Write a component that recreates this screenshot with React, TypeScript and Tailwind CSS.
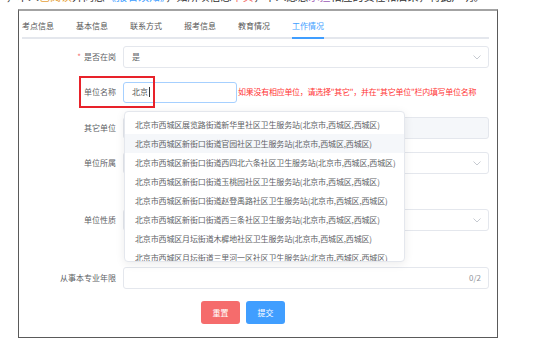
import type { ReactNode } from 'react';

const tabs = ['考点信息', '基本信息', '联系方式', '报考信息', '教育情况', '工作情况'];

const options = [
    '北京市西城区展览路街道新华里社区卫生服务站(北京市,西城区,西城区)',
    '北京市西城区新街口街道官园社区卫生服务站(北京市,西城区,西城区)',
    '北京市西城区新街口街道西四北六条社区卫生服务站(北京市,西城区,西城区)',
    '北京市西城区新街口街道玉桃园社区卫生服务站(北京市,西城区,西城区)',
    '北京市西城区新街口街道赵登禹路社区卫生服务站(北京市,西城区,西城区)',
    '北京市西城区新街口街道西三条社区卫生服务站(北京市,西城区,西城区)',
    '北京市西城区月坛街道木樨地社区卫生服务站(北京市,西城区,西城区)',
    '北京市西城区月坛街道三里河一区社区卫生服务站(北京市,西城区,西城区)',
];

function Chevron() {
    return (
        <svg className="h-[5px] w-[8px]" viewBox="0 0 8 5" fill="none">
            <polyline points="0.5,0.5 4,4 7.5,0.5" stroke="#c0c4cc" strokeWidth="0.9" />
        </svg>
    );
}

function FormRow({ label, required, className, children }: { label: string; required?: boolean; className?: string; children: ReactNode }) {
    return (
        <div className={`flex h-[22px] items-center ${className ?? ''}`}>
            <div className="w-[101px] shrink-0 pr-[7px] text-right text-[#606266]">
                {required ? <span className="mr-[3px] text-[#f56c6c]">*</span> : null}
                {label}
            </div>
            {children}
        </div>
    );
}

function SelectBox({ value }: { value?: string }) {
    return (
        <div className="flex h-[22px] flex-1 items-center justify-between rounded-[3px] border border-[#e4e7ed] bg-white pl-[8px] pr-[7px] text-[#606266]">
            <span>{value ?? ''}</span>
            <Chevron />
        </div>
    );
}

export default function App() {
    return (
        <div className="h-[341px] w-[533px] overflow-hidden bg-white font-['Noto_Sans_CJK_SC',sans-serif] text-[8px]">
            {/* tail of the line above the screenshot, mostly cut off */}
            <div className="h-[4px] overflow-hidden">
                <p className="-mt-[10px] whitespace-nowrap pl-[6px] text-[11px] leading-[12px] text-[#333]">
                    ，本人<span className="text-[#e6a23c]">已阅读</span>并同意<span className="text-[#409eff]">《报名须知》</span>，如所填信息<span className="text-[#f56c6c]">不实</span>，本人愿意<span className="text-[#9b59b6]">承担</span>相应的责任和后果，特此声明。
                </p>
            </div>

            <div className="relative ml-[18px] mt-[5px] h-[329px] w-[480px] border border-t-2 border-[#5a5a5a] border-t-[#a3a3a3] pl-[3px] pr-[8px]">
                <div className="flex gap-[22px] border-b-2 border-[#e4e7ed] pt-[4px]">
                    {tabs.map((tab, i) => (
                        <div
                            key={tab}
                            className={`-mb-[2px] h-[24px] border-b-2 leading-[22px] ${i === tabs.length - 1 ? 'border-[#409eff] text-[#409eff]' : 'border-transparent text-[#555]'}`}
                        >
                            {tab}
                        </div>
                    ))}
                </div>

                <div className="mt-[7px] flex flex-col">
                    <FormRow label="是否在岗" required>
                        <SelectBox value="是" />
                    </FormRow>

                    <FormRow label="单位名称" className="mt-[13px]">
                        <div className="flex h-[21px] w-[114px] items-center rounded-[3px] border border-[#a6d0ff] pl-[8px] text-[#555]">
                            北京<span className="ml-[1px] h-[10px] w-px bg-[#333]" />
                        </div>
                        <span className="ml-[1px] whitespace-nowrap tracking-[-0.27px] text-[#ff3333]">如果没有相应单位，请选择"其它"，并在"其它单位"栏内填写单位名称</span>
                    </FormRow>

                    <FormRow label="其它单位" className="mt-[14px]">
                        <div className="h-[22px] flex-1 rounded-[3px] border border-[#e4e7ed] bg-[#f5f7fa]" />
                    </FormRow>

                    <FormRow label="单位所属" className="mt-[13px]">
                        <SelectBox />
                    </FormRow>

                    <FormRow label="单位性质" className="mt-[35px]">
                        <SelectBox />
                    </FormRow>

                    <FormRow label="从事本专业年限" className="mt-[36px]">
                        <div className="flex h-[22px] flex-1 items-center justify-end rounded-[3px] border border-[#e4e7ed] pr-[7px] text-[#909399]">0/2</div>
                    </FormRow>

                    <div className="mt-[12px] flex gap-[6px] pl-[179px]">
                        <button className="h-[23px] w-[39px] rounded-[3px] bg-[#f56c6c] text-white">重置</button>
                        <button className="h-[23px] w-[39px] rounded-[3px] bg-[#409eff] text-white">提交</button>
                    </div>
                </div>

                {/* annotation box */}
                <div className="absolute left-[60px] top-[65px] h-[32px] w-[76px] border-2 border-[#e8222a]" />

                {/* autocomplete dropdown */}
                <div className="absolute left-[105px] top-[100px] h-[151px] w-[281px] overflow-hidden rounded-[4px] border border-[#e4e7ed] bg-white pt-[3px] shadow-[0_2px_10px_rgba(0,0,0,0.08)]">
                    {options.map((option, i) => (
                        <div key={option} className={`h-[19px] whitespace-nowrap px-[10px] leading-[19px] tracking-[-0.15px] text-[#606266] ${i === 1 ? 'bg-[#f5f7fa]' : ''}`}>
                            {option}
                        </div>
                    ))}
                </div>
            </div>
        </div>
    );
}
